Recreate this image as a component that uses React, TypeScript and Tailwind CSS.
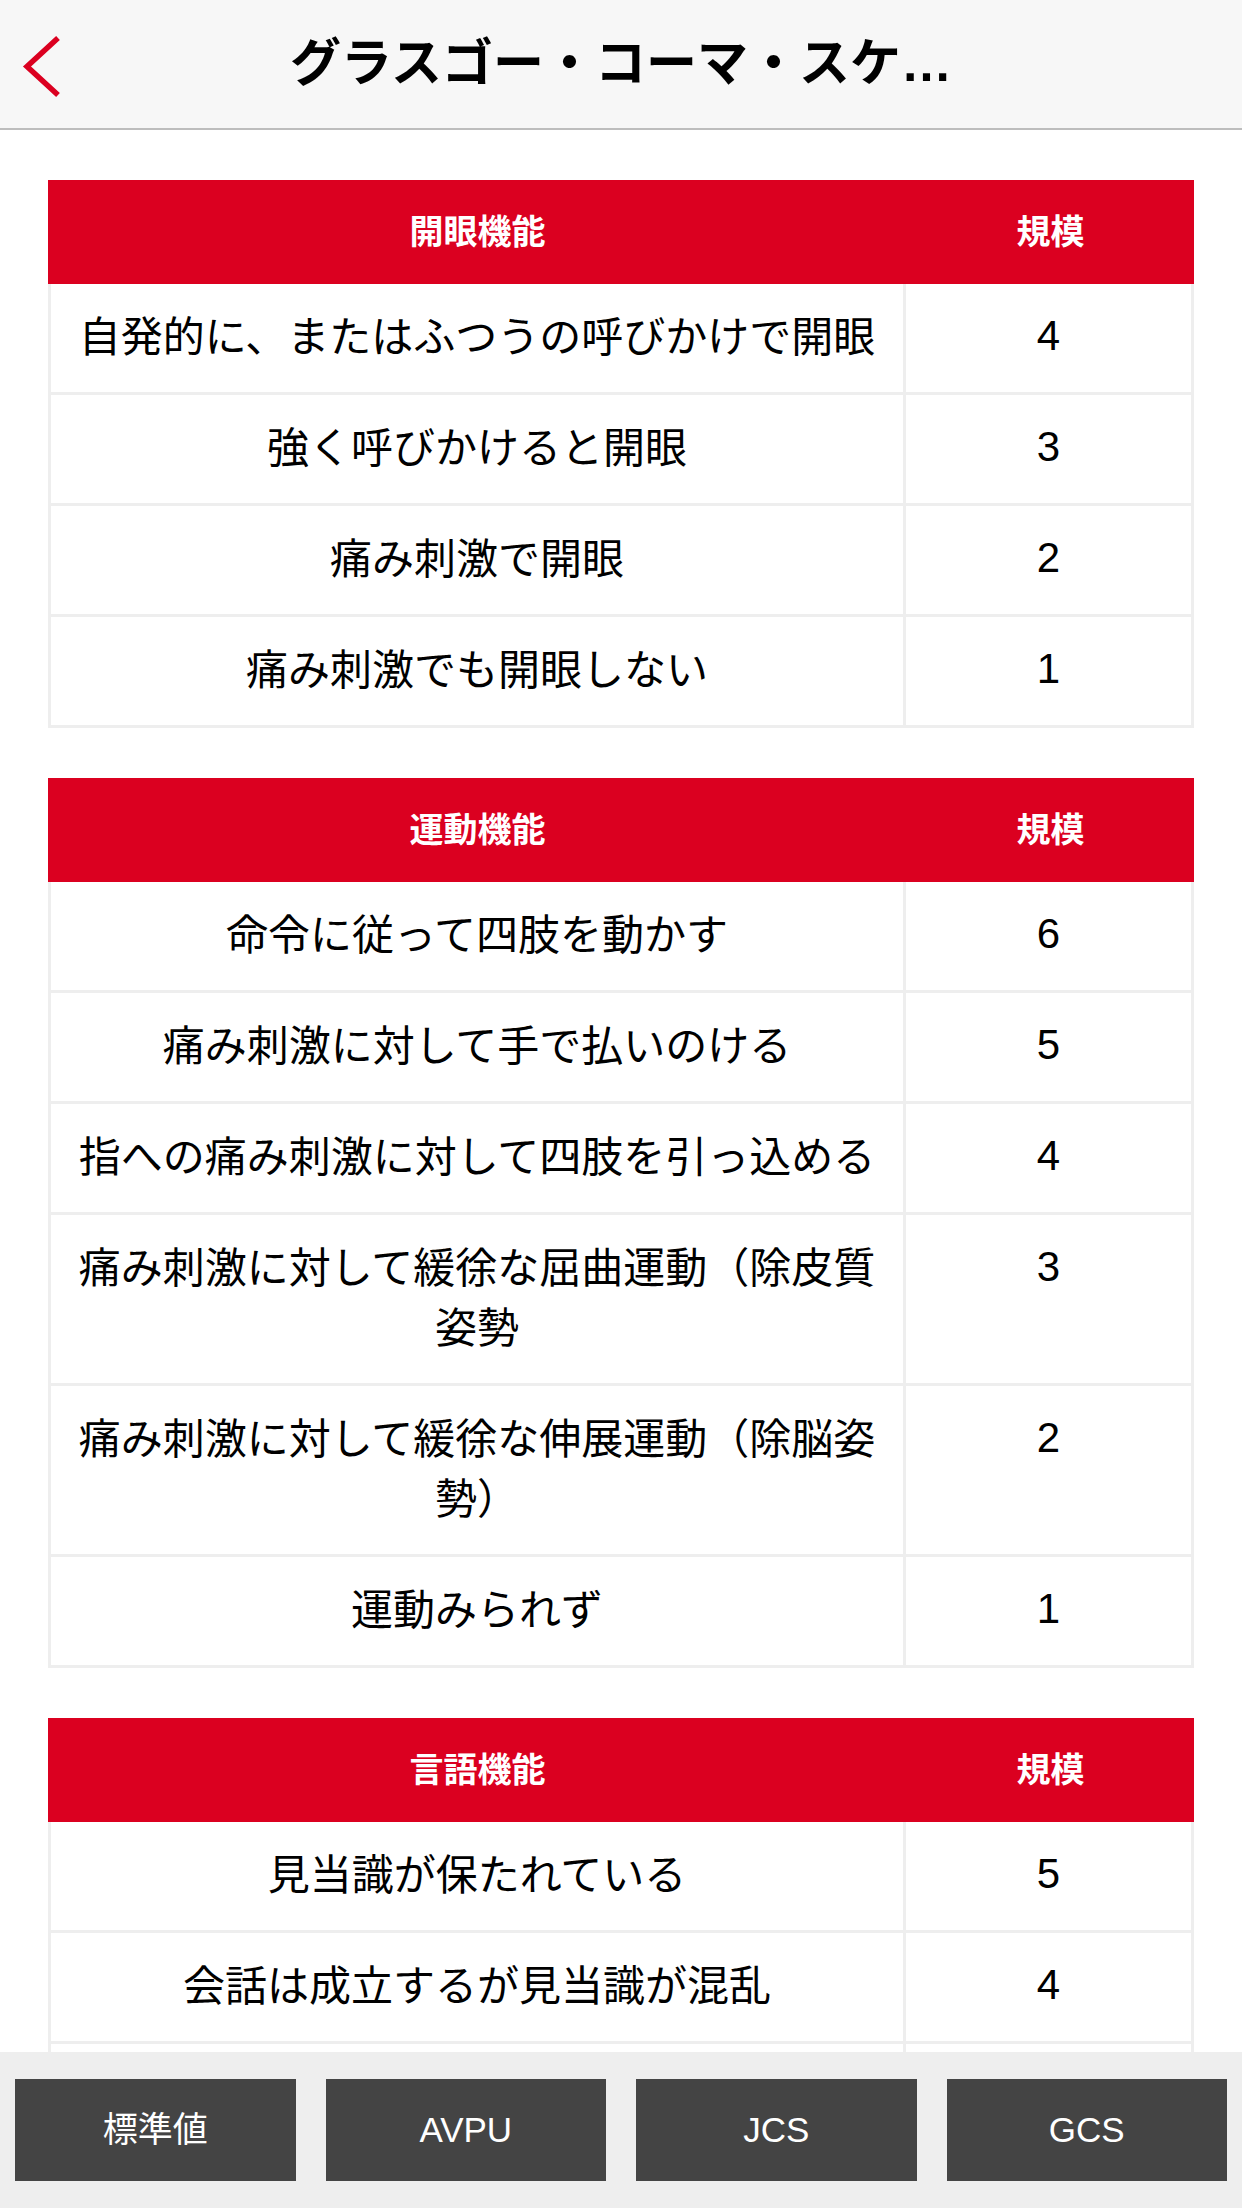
const TABLES = [
  {
    title: "開眼機能",
    rows: [
      ["自発的に、またはふつうの呼びかけで開眼", "4"],
      ["強く呼びかけると開眼", "3"],
      ["痛み刺激で開眼", "2"],
      ["痛み刺激でも開眼しない", "1"],
    ],
  },
  {
    title: "運動機能",
    rows: [
      ["命令に従って四肢を動かす", "6"],
      ["痛み刺激に対して手で払いのける", "5"],
      ["指への痛み刺激に対して四肢を引っ込める", "4"],
      ["痛み刺激に対して緩徐な屈曲運動（除皮質姿勢", "3"],
      ["痛み刺激に対して緩徐な伸展運動（除脳姿勢）", "2"],
      ["運動みられず", "1"],
    ],
  },
  {
    title: "言語機能",
    rows: [
      ["見当識が保たれている", "5"],
      ["会話は成立するが見当識が混乱", "4"],
      ["発語はみられるが会話は成立しない", "3"],
      ["意味のない発声", "2"],
      ["発語みられず", "1"],
    ],
  },
];

const TABS = ["標準値", "AVPU", "JCS", "GCS"];

function ScaleTable({ title, rows }: { title: string; rows: string[][] }) {
  return (
    <div className="shrink-0">
      {/* Head */}
      <div className="flex h-[104px] bg-[#db0020] text-white font-bold text-[34px]">
        <div className="w-[859px] flex items-center justify-center">{title}</div>
        <div className="flex-1 flex items-center justify-center">規模</div>
      </div>
      {/* Body */}
      <div className="border-x-[3px] border-[#eeeeee]">
        {rows.map(([label, score]) => (
          <div key={label} className="flex border-b-[3px] border-[#eeeeee] text-[42px] leading-[60px] text-black">
            <div className="w-[855px] shrink-0 border-r-[3px] border-[#eeeeee] px-[20px] py-[24px] text-center">
              {label}
            </div>
            <div className="flex-1 pt-[22px] pb-[26px] text-center">{score}</div>
          </div>
        ))}
      </div>
    </div>
  );
}

export default function App() {
  return (
    <div className="w-[1242px] h-[2208px] flex flex-col overflow-hidden bg-white font-['Liberation_Sans','Noto_Sans_CJK_JP',sans-serif]">
      {/* Header */}
      <header className="h-[130px] shrink-0 grid grid-cols-[130px_1fr_130px] bg-[#f7f7f7] border-b-2 border-[#bdbdbd]">
        <svg width="100" height="128" viewBox="0 0 100 128" className="block">
          <polyline points="58,38 27,66.5 58,95" fill="none" stroke="#db0020" strokeWidth="5.5" />
        </svg>
        <h1 className="flex items-center justify-center text-[51px] font-bold text-black whitespace-nowrap">
          グラスゴー・コーマ・スケ…
        </h1>
        <div />
      </header>

      {/* Content */}
      <main className="flex-1 overflow-hidden px-[48px] pt-[50px] flex flex-col gap-[50px]">
        {TABLES.map(t => (
          <ScaleTable key={t.title} title={t.title} rows={t.rows} />
        ))}
      </main>

      {/* Bottom tabs */}
      <nav className="h-[156px] shrink-0 bg-[#eeeeee] flex gap-[30px] px-[15px] py-[27px]">
        {TABS.map(tab => (
          <button key={tab} className="flex-1 bg-[#444444] text-white text-[35px] flex items-center justify-center">
            {tab}
          </button>
        ))}
      </nav>
    </div>
  );
}
